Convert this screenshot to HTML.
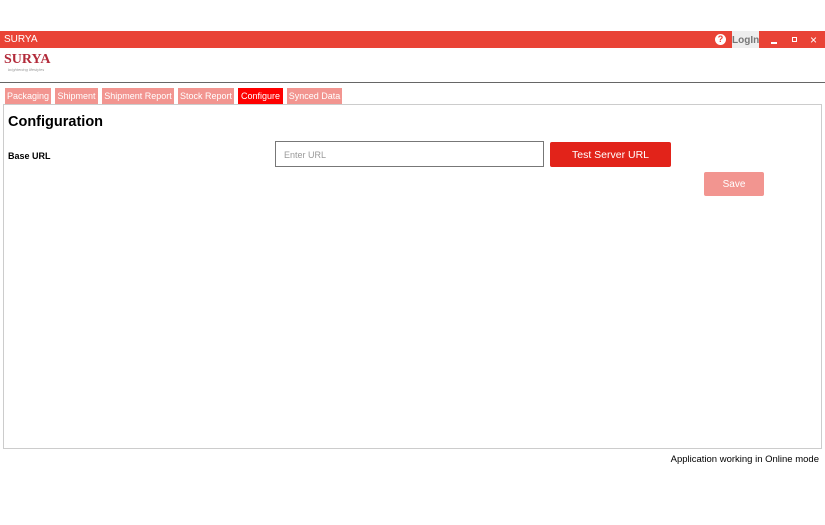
<!DOCTYPE html>
<html><head><meta charset="utf-8"><style>
*{margin:0;padding:0;box-sizing:border-box}
body{width:825px;height:525px;background:#fff;font-family:"Liberation Sans",sans-serif;position:relative;overflow:hidden}
.a{position:absolute}
.tab{position:absolute;top:88px;height:16px;background:#f29590;color:#fff;font-size:9px;line-height:17px;text-align:center;white-space:nowrap}
</style></head><body>
<div class="a" style="left:0;top:31px;width:825px;height:17px;background:#e94336"></div>
<div class="a" style="left:4px;top:34px;color:#fff;font-size:10px">SURYA</div>
<div class="a" style="left:715px;top:34px;width:11px;height:11px;border-radius:50%;background:#fff;color:#e94336;font-size:9px;font-weight:bold;text-align:center;line-height:11px">?</div>
<div class="a" style="left:732px;top:31px;width:27px;height:17px;background:#eee;color:#777;font-size:10px;font-weight:bold;line-height:19px;text-align:center">LogIn</div>
<div class="a" style="left:771px;top:42px;width:6px;height:1.5px;background:#fff"></div>
<div class="a" style="left:792px;top:37px;width:5px;height:5px;border:1px solid #fff"></div>
<div class="a" style="left:810px;top:33px;color:#fff;font-size:12px">×</div>
<div class="a" style="left:4px;top:52px;color:#b22a3a;font-family:'Liberation Serif',serif;font-weight:bold;font-size:14px">SURYA</div>
<div class="a" style="left:8px;top:67px;color:#999;font-size:4px;font-style:italic">brightening lifestyles</div>
<div class="a" style="left:0;top:82px;width:825px;height:1px;background:#666"></div>
<div class="tab" style="left:5px;width:46px">Packaging</div>
<div class="tab" style="left:55px;width:43px">Shipment</div>
<div class="tab" style="left:102px;width:72px">Shipment Report</div>
<div class="tab" style="left:178px;width:56px">Stock Report</div>
<div class="tab" style="left:238px;width:45px;background:#fe0000">Configure</div>
<div class="tab" style="left:287px;width:55px">Synced Data</div>
<div class="a" style="left:3px;top:104px;width:819px;height:345px;border:1px solid #ccc"></div>
<div class="a" style="left:8px;top:114px;font-size:14.5px;font-weight:bold;color:#000">Configuration</div>
<div class="a" style="left:8px;top:151px;font-size:9px;font-weight:bold">Base URL</div>
<div class="a" style="left:275px;top:141px;width:269px;height:26px;border:1px solid #777;color:#999;font-size:9px;line-height:26px;padding-left:8px">Enter URL</div>
<div class="a" style="left:550px;top:142px;width:121px;height:25px;background:#e2231a;border-radius:2px;color:#fff;font-size:10.5px;line-height:27px;text-align:center">Test Server URL</div>
<div class="a" style="left:704px;top:172px;width:60px;height:24px;background:#f29590;border-radius:2px;color:#fff;font-size:10px;line-height:26px;text-align:center">Save</div>
<div class="a" style="right:6px;top:454px;font-size:9.5px;color:#000">Application working in Online mode</div>
</body></html>
